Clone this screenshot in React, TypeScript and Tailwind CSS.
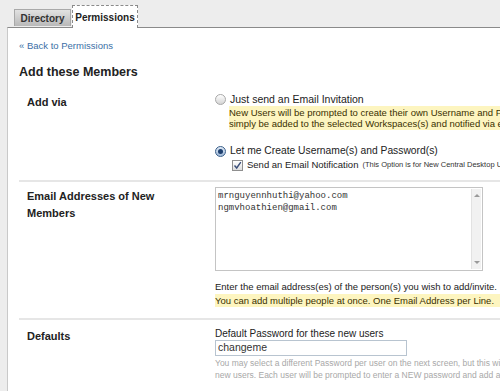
import React from 'react';

const sans = { fontFamily: '"Liberation Sans", Arial, sans-serif' };

function Radio({ checked }: { checked?: boolean }) {
  return (
    <span
      className={
        'inline-flex h-[11px] w-[11px] shrink-0 items-center justify-center rounded-full border ' +
        (checked ? 'border-[#3a5f8a] bg-gradient-to-b from-[#dfe9f5] to-[#9fb9d8]' : 'border-[#a8a8a8] bg-gradient-to-b from-[#ffffff] to-[#d4d4d4]')
      }
    >
      {checked && <span className="h-[5px] w-[5px] rounded-full bg-[#1d3f6e]" />}
    </span>
  );
}

function Checkbox() {
  return (
    <span className="inline-flex h-[11px] w-[11px] shrink-0 items-center justify-center border border-[#8f8f8f] bg-gradient-to-b from-[#ffffff] to-[#dedede]">
      <svg width="9" height="9" viewBox="0 0 9 9">
        <path d="M1.5 4.5 L3.7 7 L7.8 1.2" fill="none" stroke="#3b4f7a" strokeWidth="1.4" />
      </svg>
    </span>
  );
}

function Section({ label, children, className = '' }: { label: React.ReactNode; children: React.ReactNode; className?: string }) {
  return (
    <div className={'flex ' + className}>
      <div className="w-[196px] shrink-0 pl-[8px] pt-[1px] text-[11px] font-bold leading-[17px] text-[#222]">{label}</div>
      <div className="min-w-0 flex-1">{children}</div>
    </div>
  );
}

export default function App() {
  return (
    <div className="h-[391px] w-[500px] overflow-hidden bg-[#ededed]" style={sans}>
      {/* tabs */}
      <div className="flex h-[27px] items-end pl-[14px]">
        <div className="mb-px flex h-[17px] w-[57px] items-center justify-center border border-b-0 border-[#a9a9a9] bg-gradient-to-b from-[#e2e2e2] to-[#b9b9b9] text-[10px] font-bold text-[#333]">
          Directory
        </div>
        <div className="relative z-10 -mb-px ml-px flex h-[23px] w-[66px] items-center justify-center border border-b-0 border-dashed border-[#8a8a8a] bg-white text-[10px] font-bold text-[#222]">
          Permissions
        </div>
      </div>

      <div className="ml-[7px] h-full border-l border-t border-l-[#c9c9c9] border-t-[#8a8a8a] bg-white pl-[11px]">
        <div className="pt-[12px] text-[9.5px] leading-[12px] text-[#3b6fa6]">« Back to Permissions</div>
        <div className="mt-[12px] text-[12.5px] font-bold leading-[16px] text-[#222]">Add these Members</div>

        <Section label="Add via" className="pt-[13px] pb-[9px]">
          <div className="flex items-center gap-[4px] text-[10.5px] leading-[12px] text-[#222]">
            <Radio />
            <span>Just send an Email Invitation</span>
          </div>
          <div className="ml-[14px] mt-[1px] whitespace-nowrap bg-[#fdf5c0] py-[1px] text-[9.5px] leading-[11px] text-[#3a3000]">
            New Users will be prompted to create their own Username and Password. Existing Users will
            <br />
            simply be added to the selected Workspaces(s) and notified via email.
          </div>
          <div className="mt-[15px] flex items-center gap-[4px] text-[10.3px] leading-[12px] text-[#222]">
            <Radio checked />
            <span>Let me Create Username(s) and Password(s)</span>
          </div>
          <div className="ml-[17px] mt-[2px] flex items-center gap-[4px] whitespace-nowrap text-[9.5px] leading-[12px] text-[#222]">
            <Checkbox />
            <span>Send an Email Notification</span>
            <span className="text-[7.5px] text-[#333]">(This Option is for New Central Desktop Users only)</span>
          </div>
        </Section>

        <div className="h-[2px] bg-[#e6e6e6]" />

        <Section label={<>Email Addresses of New<br />Members</>} className="pt-[5px] pb-[11px]">
          <div className="relative h-[84px] w-[268px] border border-[#c4c4c4] bg-white">
            <div
              className="px-[2px] pt-[2px] text-[9px] leading-[12px] text-[#333]"
              style={{ fontFamily: '"Liberation Mono", "Courier New", monospace' }}
            >
              mrnguyennhuthi@yahoo.com
              <br />
              ngmvhoathien@gmail.com
            </div>
            <div className="absolute right-px top-px bottom-px flex w-[10px] flex-col items-center justify-between border-l border-[#e2e2e2] bg-[#f1f1f1] py-[5px]">
              <span className="h-0 w-0 border-x-[3px] border-b-[3px] border-x-transparent border-b-[#9a9a9a]" />
              <span className="h-0 w-0 border-x-[3px] border-t-[3px] border-x-transparent border-t-[#9a9a9a]" />
            </div>
          </div>
          <div className="mt-[9px] whitespace-nowrap text-[9.5px] leading-[14px] text-[#222]">
            Enter the email address(es) of the person(s) you wish to add/invite.
          </div>
          <div className="w-fit whitespace-nowrap bg-[#fdf5c0] pr-[6px] text-[9.5px] leading-[13px] text-[#3a3000]">
            You can add multiple people at once. One Email Address per Line.
          </div>
        </Section>

        <div className="h-[2px] bg-[#e6e6e6]" />

        <Section label="Defaults" className="pt-[7px]">
          <div className="mt-[1px] whitespace-nowrap text-[10px] leading-[12px] text-[#222]">Default Password for these new users</div>
          <div className="flex h-[16px] w-[192px] items-center border border-[#b8c4d0] px-[2px] text-[10.5px] text-[#333]">
            changeme
          </div>
          <div className="mt-[1px] whitespace-nowrap text-[8.5px] leading-[12px] text-[#a8a8a8]">
            You may select a different Password per user on the next screen, but this will be the default for all
            <br />
            new users. Each user will be prompted to enter a NEW password and add a security question.
          </div>
        </Section>
      </div>
    </div>
  );
}
